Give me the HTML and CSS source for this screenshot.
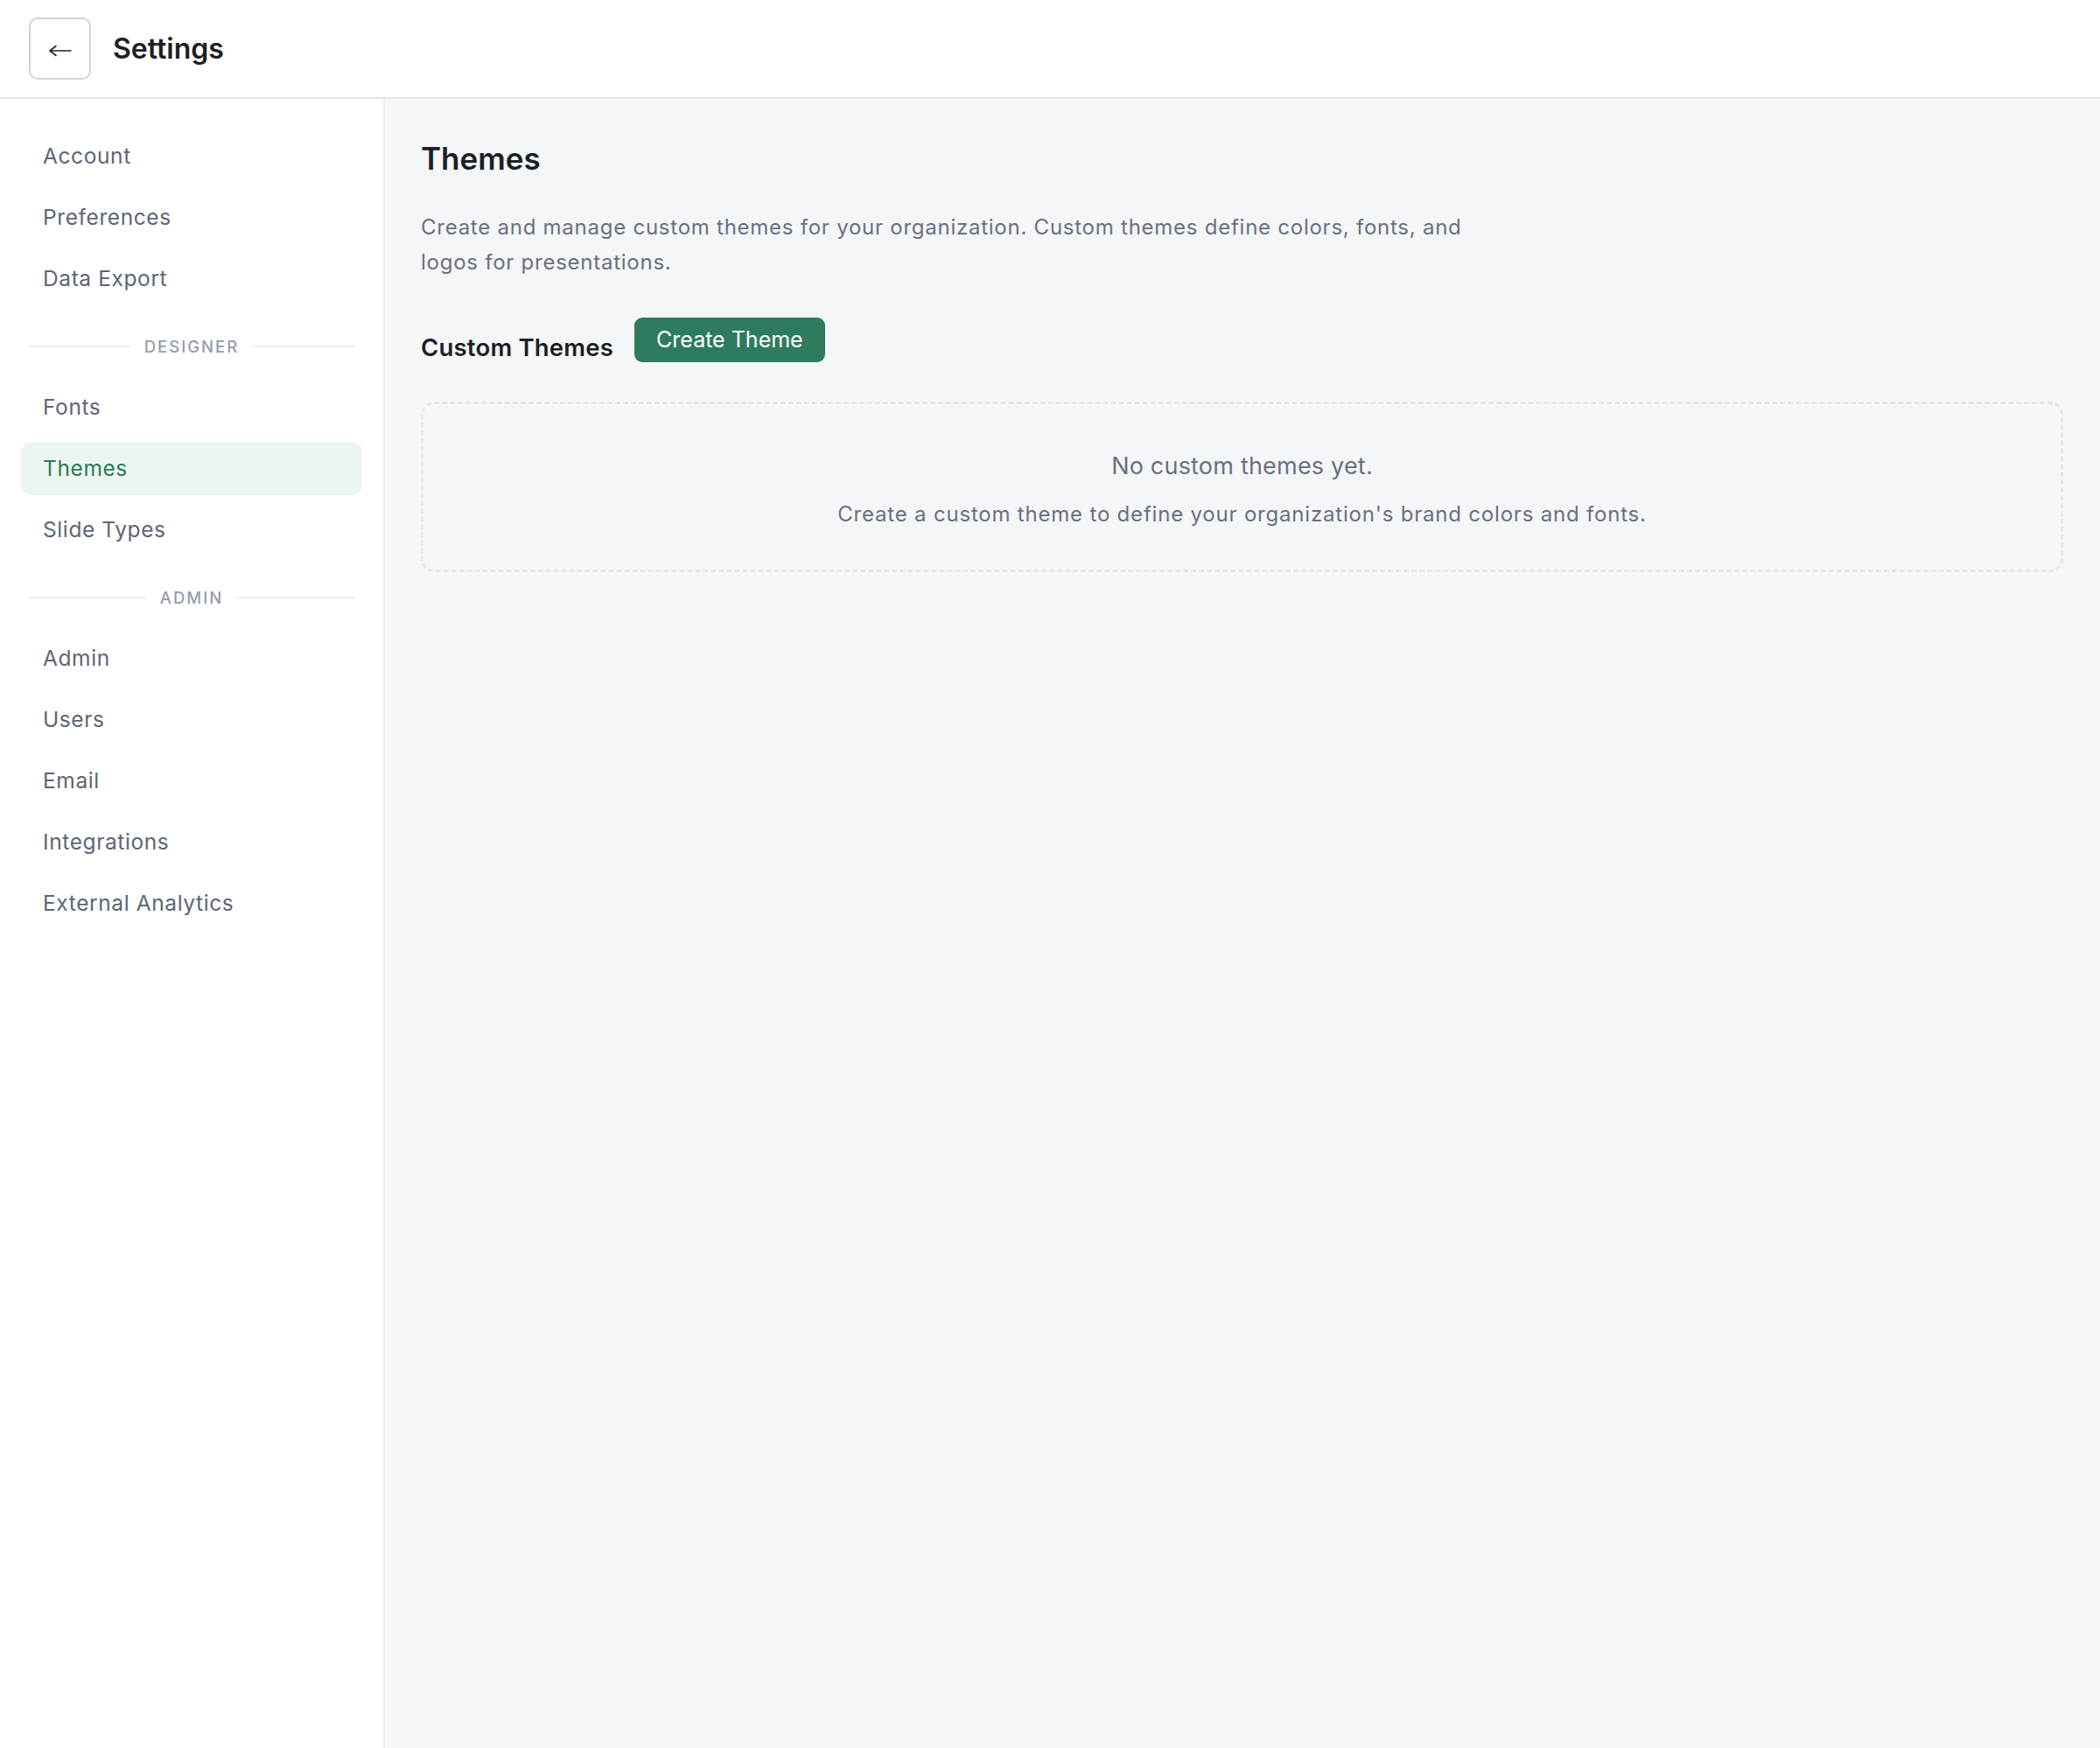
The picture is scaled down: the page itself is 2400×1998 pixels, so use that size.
FILE: index.html
```html
<!DOCTYPE html>
<html lang="en">
<head>
    <meta charset="UTF-8">
    <meta name="viewport" content="width=device-width, initial-scale=1.0">
    <title>Settings</title>
    <link rel="stylesheet" href="styles.css">
</head>
<body>
    <header class="topbar">
        <button class="back-btn" aria-label="Back">
            <svg width="26" height="14" viewBox="0 0 26 14">
                <path d="M1 7 H25 M1 7 L8 1.5 M1 7 L8 12.5" fill="none" stroke="#1f2328" stroke-width="1.6" stroke-linecap="round"/>
            </svg>
        </button>
        <span class="topbar-title">Settings</span>
    </header>

    <div class="layout">
        <!-- Sidebar navigation -->
        <nav class="sidebar">
            <a class="nav-item">Account</a>
            <a class="nav-item">Preferences</a>
            <a class="nav-item">Data Export</a>

            <div class="nav-divider"><span>Designer</span></div>
            <a class="nav-item">Fonts</a>
            <a class="nav-item active">Themes</a>
            <a class="nav-item">Slide Types</a>

            <div class="nav-divider"><span>Admin</span></div>
            <a class="nav-item">Admin</a>
            <a class="nav-item">Users</a>
            <a class="nav-item">Email</a>
            <a class="nav-item">Integrations</a>
            <a class="nav-item">External Analytics</a>
        </nav>

        <main class="content">
            <h1>Themes</h1>
            <p class="description">Create and manage custom themes for your organization. Custom themes define colors, fonts, and logos for presentations.</p>

            <div class="section-head">
                <h2>Custom Themes</h2>
                <button class="primary-btn">Create Theme</button>
            </div>

            <div class="empty-state">
                <p class="empty-title">No custom themes yet.</p>
                <p class="empty-text">Create a custom theme to define your organization's brand colors and fonts.</p>
            </div>
        </main>
    </div>
</body>
</html>
```

FILE: styles.css
```css
* {
    box-sizing: border-box;
}

body {
    font-family: Inter, "Noto Sans", sans-serif;
    margin: 0;
    background-color: #f5f6f8;
    color: #1c1f24;
    min-height: 100vh;
    display: flex;
    flex-direction: column;
}

/* Top bar */
.topbar {
    height: 113px;
    background: #ffffff;
    border-bottom: 2px solid #e4e6ea;
    display: flex;
    align-items: center;
    padding: 0 33px;
    gap: 25px;
}

.back-btn {
    width: 71px;
    height: 71px;
    border: 2px solid #cfd4dd;
    border-radius: 10px;
    background: #ffffff;
    display: flex;
    align-items: center;
    justify-content: center;
    padding: 0;
    padding-top: 4px;
    cursor: pointer;
}

.topbar-title {
    font-size: 32px;
    font-weight: 600;
    color: #1c1f24;
}

/* Layout */
.layout {
    flex: 1;
    display: flex;
}

.sidebar {
    width: 440px;
    flex-shrink: 0;
    background: #ffffff;
    border-right: 2px solid #eceef1;
    padding: 35px 24px;
    display: flex;
    flex-direction: column;
    gap: 9px;
}

.nav-item {
    display: block;
    height: 61px;
    line-height: 61px;
    padding: 0 25px;
    border-radius: 12px;
    font-size: 24.5px;
    letter-spacing: 0.6px;
    color: #5d6676;
    cursor: pointer;
}

.nav-item.active {
    background: #ecf6f1;
    color: #2b7a5a;
}

.nav-divider {
    display: flex;
    align-items: center;
    gap: 16px;
    margin: 28px 8px 20px;
    height: 20px;
    font-size: 18.5px;
    font-weight: 500;
    letter-spacing: 2px;
    text-transform: uppercase;
    color: #959cab;
}

.nav-divider::before,
.nav-divider::after {
    content: "";
    flex: 1;
    height: 2px;
    background: #eceef2;
}

/* Main content */
.content {
    flex: 1;
    padding: 46px 42px 42px 41px;
}

.content h1 {
    margin: 0 0 36px;
    font-size: 35px;
    line-height: 45px;
    font-weight: 600;
    color: #1c1f24;
}

.description {
    margin: 0;
    max-width: 1210px;
    font-size: 24px;
    line-height: 40px;
    letter-spacing: 0.75px;
    color: #687080;
}

.section-head {
    display: flex;
    align-items: center;
    gap: 24px;
    margin-top: 42px;
}

.section-head h2 {
    margin: 18px 0 0;
    font-size: 27.5px;
    letter-spacing: 0.2px;
    font-weight: 600;
    color: #1c1f24;
}

.primary-btn {
    height: 51px;
    padding: 0 25px;
    border: none;
    border-radius: 9px;
    background: #2e7b5f;
    color: #ffffff;
    font-family: inherit;
    font-size: 25px;
    cursor: pointer;
}

.empty-state {
    margin-top: 45px;
    border: 3px dashed #e5e7eb;
    border-radius: 15px;
    padding: 51px 20px 45px;
    text-align: center;
    color: #687080;
}

.empty-title {
    margin: 0 0 17px;
    font-size: 27px;
    line-height: 40px;
    letter-spacing: 0.2px;
}

.empty-text {
    margin: 0;
    font-size: 24px;
    line-height: 36px;
    letter-spacing: 0.8px;
}
```
